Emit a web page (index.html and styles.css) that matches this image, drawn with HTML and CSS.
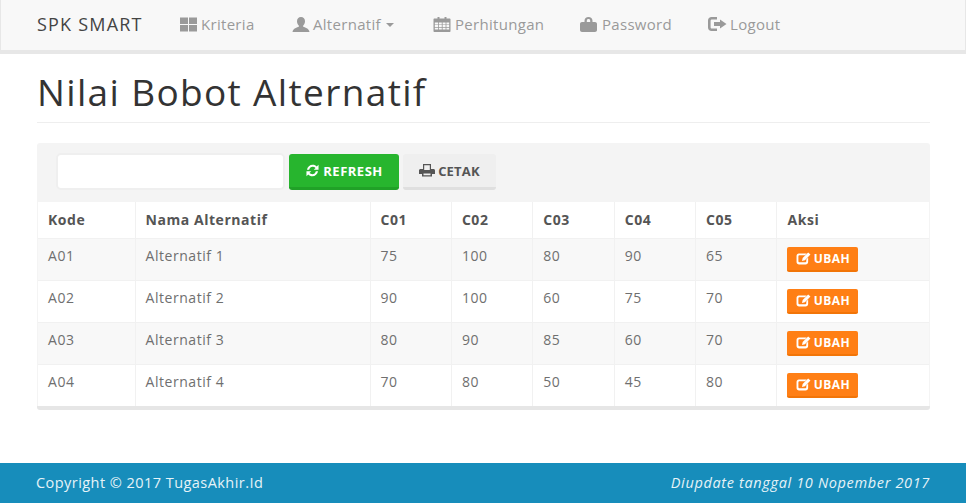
FILE: index.html
```html
<!DOCTYPE html>
<html lang="id">
<head>
<meta charset="utf-8">
<title>Nilai Bobot Alternatif</title>
<link rel="stylesheet" href="styles.css">
</head>
<body>
<svg class="defs" width="0" height="0" aria-hidden="true">
  <symbol id="i-edit" viewBox="0 0 16 14"><path d="M3 1.500h8.500L9.500 3.500H3.500C2.900 3.500 2.500 3.900 2.500 4.500v5.500c0 .6.4 1 1 1h6.500c.6 0 1-.4 1-1V8l2-2v4.800c0 1.500-1.200 2.700-2.700 2.700H3.200C1.700 13.500.5 12.300.5 10.800V4.200C.5 2.700 1.500 1.500 3 1.500zM13 .5l2.500 2.300-6 6-3.100.8.700-3.200z" fill="currentColor"/></symbol>
</svg>

<nav class="navbar">
  <a class="brand">SPK SMART</a>
  <a class="nav-link nl1"><svg class="nav-ico ico-grid" viewBox="0 0 17 14"><path d="M0 0h8v6.500H0zM9 0h8v6.500H9zM0 7.500h8V14H0zM9 7.500h8V14H9z" fill="currentColor"/></svg>Kriteria</a>
  <a class="nav-link nl2"><svg class="nav-ico ico-user" viewBox="0 0 18 15"><path d="M9 0c2.500 0 4 1.800 4 4.200 0 1.800-.8 3.400-1.800 4.400v1.100c1.500.6 5.800 1.500 6.300 5.300H.5c.5-3.800 4.800-4.700 6.300-5.300V8.600C5.800 7.600 5 6 5 4.200 5 1.800 6.500 0 9 0z" fill="currentColor"/></svg>Alternatif <span class="caret"></span></a>
  <a class="nav-link nl3"><svg class="nav-ico ico-cal" viewBox="0 0 17 15"><path fill-rule="evenodd" d="M1 1.500h3V0h2v1.500h5V0h2v1.500h3c.6 0 1 .4 1 1V14c0 .6-.4 1-1 1H1c-.6 0-1-.4-1-1V2.500c0-.6.4-1 1-1zM1.300 5.500v1.900h3.200V5.500zm4 0v1.900h3V5.500zm3.800 0v1.900h3V5.500zm3.800 0v1.900h2.800V5.500zM1.300 8.100V10h3.200V8.100zm4 0V10h3V8.100zm3.800 0V10h3V8.100zm3.800 0V10h2.800V8.100zM1.300 10.700v1.900h3.200v-1.900zm4 0v1.900h3v-1.900zm3.800 0v1.900h3v-1.900zm3.800 0v1.900h2.800v-1.900z" fill="currentColor"/></svg>Perhitungan</a>
  <a class="nav-link nl4"><svg class="nav-ico ico-lock" viewBox="0 0 17 15"><path fill-rule="evenodd" d="M4.500 5V3.800C4.500 1.500 6.200 0 8.500 0s4 1.500 4 3.800V5H15c1.100 0 2 .9 2 2v6c0 1.100-.9 2-2 2H2c-1.100 0-2-.9-2-2V7c0-1.100.9-2 2-2zM6.800 5h3.400V3.800c0-1-.7-1.700-1.700-1.700S6.800 2.800 6.800 3.800z" fill="currentColor"/></svg>Password</a>
  <a class="nav-link nl5"><svg class="nav-ico ico-out" viewBox="0 0 19 14"><path d="M3.500 0H9v2.500H4C3 2.500 2.600 3 2.600 4v6c0 1 .4 1.500 1.400 1.500h5V14H3.500C1.500 14 0 12.500 0 10.500v-7C0 1.500 1.500 0 3.500 0zM12 2.500 18.500 7 12 11.500V9H6V5h6z" fill="currentColor"/></svg>Logout</a>
</nav>

<main class="container">
  <h1 class="page-title">Nilai Bobot Alternatif</h1>

  <section class="panel">
    <div class="toolbar">
      <input class="search" type="text" aria-label="Cari">
      <a class="btn btn-green"><svg class="btn-ico ico-sync" viewBox="0 0 16 14"><path d="M2 6.200C2.600 3 5.100.8 8.200.8c1.800 0 3.300.7 4.400 1.900L14.500.8v5.400H9.300l2-2c-.8-.8-1.900-1.200-3.100-1.200-1.900 0-3.300 1-3.800 3.200zM14 7.800c-.6 3.200-3.100 5.400-6.200 5.400-1.800 0-3.300-.7-4.400-1.900l-1.900 1.900V7.800h5.200l-2 2c.8.800 1.900 1.200 3.100 1.200 1.900 0 3.300-1 3.800-3.200z" fill="currentColor"/></svg>REFRESH</a>
      <a class="btn btn-gray"><svg class="btn-ico ico-print" viewBox="0 0 16 13"><path fill-rule="evenodd" d="M4 0h8v5h2.500c.8 0 1.500.7 1.500 1.500V10h-3v2.500H3V10H0V6.500C0 5.700.7 5 1.500 5H4zm1.200 1.200V6h5.600V1.200zM4.500 9.500v1.800h7V9.500z" fill="currentColor"/></svg>CETAK</a>
    </div>
    <table class="data">
      <colgroup>
        <col class="c-kode"><col class="c-nama"><col class="c-n"><col class="c-n"><col class="c-n"><col class="c-n"><col class="c-n"><col>
      </colgroup>
      <thead>
        <tr><th>Kode</th><th>Nama Alternatif</th><th>C01</th><th>C02</th><th>C03</th><th>C04</th><th>C05</th><th>Aksi</th></tr>
      </thead>
      <tbody>
        <tr><td>A01</td><td>Alternatif 1</td><td>75</td><td>100</td><td>80</td><td>90</td><td>65</td><td><a class="btn-edit"><svg class="edit-ico"><use href="#i-edit"/></svg>UBAH</a></td></tr>
        <tr><td>A02</td><td>Alternatif 2</td><td>90</td><td>100</td><td>60</td><td>75</td><td>70</td><td><a class="btn-edit"><svg class="edit-ico"><use href="#i-edit"/></svg>UBAH</a></td></tr>
        <tr><td>A03</td><td>Alternatif 3</td><td>80</td><td>90</td><td>85</td><td>60</td><td>70</td><td><a class="btn-edit"><svg class="edit-ico"><use href="#i-edit"/></svg>UBAH</a></td></tr>
        <tr><td>A04</td><td>Alternatif 4</td><td>70</td><td>80</td><td>50</td><td>45</td><td>80</td><td><a class="btn-edit"><svg class="edit-ico"><use href="#i-edit"/></svg>UBAH</a></td></tr>
      </tbody>
    </table>
  </section>
</main>

<footer class="footer">
  <span class="copy">Copyright © 2017 TugasAkhir.Id</span>
  <em class="updated">Diupdate tanggal 10 Nopember 2017</em>
</footer>
</body>
</html>
```

FILE: styles.css
```css
* { box-sizing: border-box; }
html, body { height: 100%; }
body {
  margin: 0;
  height: 503px;
  overflow: hidden;
  display: flex;
  flex-direction: column;
  font-family: "Open Sans", "Noto Sans", sans-serif;
  font-size: 14px;
  color: #555;
  background: #fff;
}
.defs { position: absolute; }

.navbar {
  height: 54px;
  flex: none;
  display: flex;
  align-items: center;
  padding: 0 0 2px 36px;
  background: #f8f8f8;
  border-left: 1px solid #e7e7e7;
  border-right: 1px solid #e7e7e7;
  border-bottom: 4px solid #e7e7e7;
}
.brand {
  font-size: 18px;
  color: #444;
  width: 143px;
  letter-spacing: 1.200px;
  line-height: 24px;
  white-space: nowrap;
}
.nav-link {
  display: flex;
  align-items: center;
  color: #9a9a9a;
  font-size: 15px;
  letter-spacing: .3px;
  white-space: nowrap;
}
.nl1 { width: 112px; }
.nl2 { width: 141px; }
.nl3 { width: 147px; }
.nl4 { width: 128px; }
.nav-ico { height: 15px; flex: none; margin-right: 4px; }
.ico-grid { width: 17px; }
.ico-user { width: 18px; margin-right: 3px; }
.ico-cal { width: 18px; }
.ico-lock { width: 17px; margin-right: 5px; }
.ico-out { width: 19px; height: 14px; margin-right: 3px; }
.caret {
  display: inline-block;
  margin-left: 5px;
  margin-top: 2px;
  border-top: 4px solid #9a9a9a;
  border-left: 4px solid transparent;
  border-right: 4px solid transparent;
}

.container {
  flex: 1;
  padding: 0 36px 0 37px;
}
.page-title {
  margin: 16px 0 20px;
  height: 53px;
  border-bottom: 1px solid #eee;
  font-size: 37px;
  font-weight: 400;
  line-height: 44px;
  color: #333;
  letter-spacing: 1.350px;
}

.panel {
  background: #f4f4f4;
  border-radius: 3px;
  border-bottom: 4px solid #e6e6e6;
  overflow: hidden;
}
.toolbar {
  height: 59px;
  display: flex;
  align-items: flex-end;
  gap: 4px;
  padding: 10px 0 12px 19px;
}
.search {
  width: 229px;
  height: 37px;
  background: #fff;
  border: 2px solid #efefef;
  border-radius: 5px;
}
.btn {
  height: 36px;
  border-radius: 3px;
  display: flex;
  align-items: center;
  justify-content: center;
  font-size: 13px;
  font-weight: 700;
}
.btn-green {
  width: 110px;
  color: #fff;
  background: #27b52e;
  border-bottom: 3px solid #20a127;
  letter-spacing: .5px;
}
.btn-gray {
  width: 93px;
  color: #555;
  background: #efefef;
  border-bottom: 3px solid #dfdfdf;
  letter-spacing: .2px;
}
.btn-ico { height: 13px; flex: none; margin-right: 3px; }
.ico-sync { width: 15px; }
.ico-print { width: 16px; }

.data {
  width: 891px;
  margin-left: 1px;
  border-collapse: collapse;
  table-layout: fixed;
  background: #fff;
  font-size: 14px;
  letter-spacing: .55px;
}
.c-kode { width: 97px; }
.c-nama { width: 235px; }
.c-n { width: 81.400px; }
.data th, .data td {
  padding: 0 10px;
  border-right: 1px solid #f1f1f1;
  border-bottom: 1px solid #f1f1f1;
  text-align: left;
  vertical-align: middle;
}
.data th:last-child, .data td:last-child { border-right: 0; }
.data tr:last-child td { border-bottom: 0; }
.data th { height: 36px; color: #555; font-weight: 700; padding-bottom: 1px; }
.data td { height: 42px; color: #6f6f6f; padding-bottom: 8px; }
.data tbody tr:nth-child(odd) td { background: #f8f8f8; }
.data tbody tr:last-child td { background: #fff; }
.data td:last-child { padding-bottom: 0; }
.btn-edit {
  width: 71px;
  height: 25px;
  display: flex;
  align-items: center;
  justify-content: center;
  background: #ff7f15;
  border-bottom: 2px solid #f27508;
  border-radius: 2px;
  color: #fff;
  font-size: 12px;
  font-weight: 700;
  letter-spacing: .4px;
}
.edit-ico { width: 15px; height: 13px; margin-right: 3px; flex: none; }

.footer {
  height: 40px;
  flex: none;
  display: flex;
  align-items: center;
  justify-content: space-between;
  padding: 0 36px 2px;
  background: #178dbb;
  color: #e6f3f8;
  font-size: 14.500px;
}
.copy { letter-spacing: .45px; }
.updated { letter-spacing: .65px; }
```
